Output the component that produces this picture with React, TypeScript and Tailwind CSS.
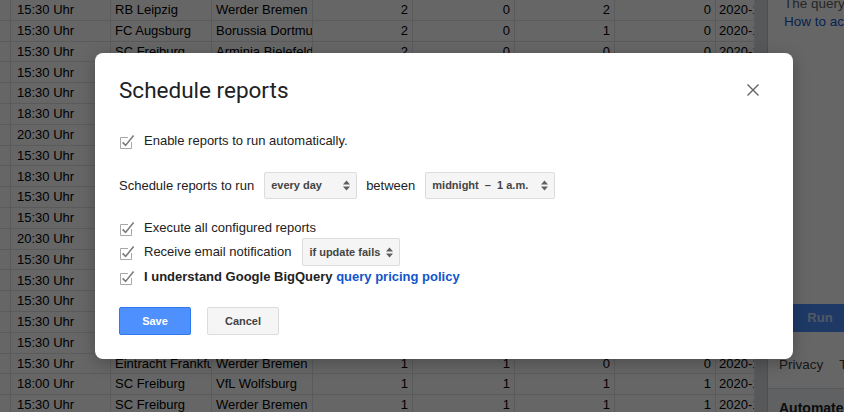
import React from 'react'

const rows: string[][] = [
  ['15:30 Uhr', 'RB Leipzig', 'Werder Bremen', '2', '0', '2', '0'],
  ['15:30 Uhr', 'FC Augsburg', 'Borussia Dortmund', '2', '0', '1', '0'],
  ['15:30 Uhr', 'SC Freiburg', 'Arminia Bielefeld', '2', '0', '0', '0'],
  ['15:30 Uhr', 'VfB Stuttgart', 'Bayer Leverkusen', '1', '1', '1', '1'],
  ['18:30 Uhr', 'FC Bayern', 'Hertha BSC', '2', '0', '2', '0'],
  ['18:30 Uhr', 'Union Berlin', 'Mainz 05', '2', '1', '1', '0'],
  ['20:30 Uhr', 'Schalke 04', 'RB Leipzig', '1', '1', '0', '0'],
  ['15:30 Uhr', 'Werder Bremen', 'FC Augsburg', '2', '0', '1', '0'],
  ['18:30 Uhr', 'Hoffenheim', '1. FC Köln', '1', '1', '1', '1'],
  ['15:30 Uhr', 'VfL Wolfsburg', 'Eintracht Frankfurt', '1', '1', '0', '0'],
  ['15:30 Uhr', 'Mainz 05', 'VfB Stuttgart', '2', '0', '1', '0'],
  ['20:30 Uhr', 'Bayer Leverkusen', 'Borussia M’gladbach', '1', '1', '1', '1'],
  ['15:30 Uhr', 'Hertha BSC', 'Union Berlin', '2', '0', '2', '0'],
  ['15:30 Uhr', '1. FC Köln', 'Schalke 04', '1', '1', '0', '0'],
  ['15:30 Uhr', 'Arminia Bielefeld', 'Hoffenheim', '2', '0', '1', '0'],
  ['15:30 Uhr', 'Borussia Dortmund', 'SC Freiburg', '1', '1', '1', '1'],
  ['15:30 Uhr', 'FC Augsburg', 'FC Bayern', '2', '0', '0', '0'],
  ['15:30 Uhr', 'Eintracht Frankfurt', 'Werder Bremen', '1', '1', '0', '0'],
  ['18:00 Uhr', 'SC Freiburg', 'VfL Wolfsburg', '1', '1', '1', '1'],
  ['15:30 Uhr', 'SC Freiburg', 'Werder Bremen', '1', '1', '1', '1'],
]

const cell = 'shrink-0 overflow-hidden whitespace-nowrap border-r border-b border-[#e2e3e3]'

function Sheet() {
  return (
    <div className="w-[755px] shrink-0 font-['Liberation_Sans',Arial,sans-serif] text-[13px] text-black">
      {rows.map((r, i) => (
        <div key={i} className="flex h-[20.8px] items-center">
          <div className={`${cell} h-full w-[11px]`} />
          <div className={`${cell} flex h-full w-[100px] items-center pl-[6px]`}>{r[0]}</div>
          <div className={`${cell} flex h-full w-[101px] items-center pl-[4px]`}>{r[1]}</div>
          <div className={`${cell} flex h-full w-[101px] items-center pl-[4px]`}>{r[2]}</div>
          <div className={`${cell} flex h-full w-[100px] items-center justify-end pr-[4px]`}>{r[3]}</div>
          <div className={`${cell} flex h-full w-[102px] items-center justify-end pr-[4px]`}>{r[4]}</div>
          <div className={`${cell} flex h-full w-[100px] items-center justify-end pr-[4px]`}>{r[5]}</div>
          <div className={`${cell} flex h-full w-[101px] items-center justify-end pr-[4px]`}>{r[6]}</div>
          <div className={`${cell} flex h-full w-[39px] items-center pl-[3px]`}>2020-10-03</div>
        </div>
      ))}
    </div>
  )
}

function Sidebar() {
  return (
    <div className="flex min-w-0 flex-1 flex-col border-l border-[#c6c6c6] bg-white font-['Liberation_Sans',Arial,sans-serif]">
      <div className="-mt-[5px] pl-[16px] whitespace-nowrap">
        <div className="h-[18px] text-[13.5px] leading-[18px] text-[#5f6368]">The query will run</div>
        <div className="h-[18px] text-[13.5px] leading-[18px] text-[#1155cc]">How to access</div>
      </div>
      <div className="mt-[273px] ml-[10px] flex h-[28px] w-[84px] shrink-0 items-center justify-center rounded-[2px] bg-[#4d90fe] text-[13px] font-bold text-white/70">
        Run
      </div>
      <div className="mt-[23px] flex gap-[16px] whitespace-nowrap pl-[11px] text-[13.5px] leading-[20px] text-[#3c4043]">
        <span>Privacy</span>
        <span>Terms</span>
      </div>
      <div className="mt-[13px] flex-1 border-t border-[#dadce0] bg-[#f1f3f4] pl-[11px] pt-[9px] text-[14px] font-bold whitespace-nowrap text-[#202124]">
        Automated reports
      </div>
    </div>
  )
}

function Check() {
  return (
    <svg width="15" height="15" viewBox="0 0 15 15" className="shrink-0">
      <path d="M8 3.5H0.5V14.5H11.5V8" fill="none" stroke="#a8a8a8" strokeWidth="1" />
      <path d="M2.6 8.4L5.6 11.4L13.6 1.6" fill="none" stroke="#7a7a7a" strokeWidth="1.6" />
    </svg>
  )
}

function Arrows() {
  return (
    <svg width="7" height="11" viewBox="0 0 7 11" className="shrink-0">
      <path d="M0 4.5L3.5 0.5L7 4.5Z" fill="#5f5f5f" />
      <path d="M0 6.5L3.5 10.5L7 6.5Z" fill="#5f5f5f" />
    </svg>
  )
}

function Select({ label, className }: { label: string; className: string }) {
  return (
    <div
      className={`flex shrink-0 items-center justify-between rounded-[2px] border border-[#dcdcdc] bg-[#f5f5f5] pl-[6px] pr-[6px] text-[11px] font-bold whitespace-pre text-[#444] ${className}`}
    >
      <span>{label}</span>
      <Arrows />
    </div>
  )
}

function Dialog() {
  return (
    <div className="absolute left-[95px] top-[53px] flex h-[306px] w-[698px] flex-col rounded-[8px] bg-white px-[24px] pt-[23px] shadow-[0_4px_16px_rgba(0,0,0,0.25)] font-['Liberation_Sans',Arial,sans-serif] text-[13px] text-[#222]">
      <div className="flex h-[28px] items-center justify-between pr-[10px]">
        <h2 className="font-['Roboto',sans-serif] text-[22.5px] leading-[28px] text-[#202124]">Schedule reports</h2>
        <button className="flex h-[12px] w-[12px] items-center justify-center">
          <svg width="12" height="12" viewBox="0 0 12 12">
            <path d="M0.5 0.5L11.5 11.5M11.5 0.5L0.5 11.5" stroke="#5f6368" strokeWidth="1.4" />
          </svg>
        </button>
      </div>

      <div className="mt-[27px] flex h-[20px] items-center gap-[9px] pl-px">
        <Check />
        <span>Enable reports to run automatically.</span>
      </div>

      <div className="mt-[21px] flex h-[27px] items-center">
        <span>Schedule reports to run</span>
        <Select label="every day" className="ml-[10px] h-[27px] w-[93px]" />
        <span className="ml-[9px]">between</span>
        <Select label="midnight  –  1 a.m." className="ml-[10px] h-[27px] w-[130px]" />
      </div>

      <div className="mt-[19px] flex h-[20px] items-center gap-[9px] pl-px">
        <Check />
        <span>Execute all configured reports</span>
      </div>

      <div className="flex h-[28px] items-center pl-px">
        <Check />
        <span className="ml-[9px]">Receive email notification</span>
        <Select label="if update fails" className="ml-[11px] h-[28px] w-[98px]" />
      </div>

      <div className="mt-px flex h-[20px] items-center gap-[9px] pl-px">
        <Check />
        <span className="font-bold">
          I understand Google BigQuery <span className="text-[#1155cc]">query pricing policy</span>
        </span>
      </div>

      <div className="mt-[20px] flex gap-[16px]">
        <button className="h-[28px] w-[72px] rounded-[2px] border border-[#3079ed] bg-[#4d90fe] text-[11px] font-bold text-white">
          Save
        </button>
        <button className="h-[28px] w-[72px] rounded-[2px] border border-[#dcdcdc] bg-[#f5f5f5] text-[11px] font-bold text-[#444]">
          Cancel
        </button>
      </div>
    </div>
  )
}

export default function App() {
  return (
    <div className="relative flex h-[412px] w-[844px] overflow-hidden bg-white">
      <Sheet />
      <div className="w-[12px] shrink-0 bg-[#dadce0]" />
      <Sidebar />
      <div className="absolute inset-0 bg-black/60" />
      <Dialog />
    </div>
  )
}
